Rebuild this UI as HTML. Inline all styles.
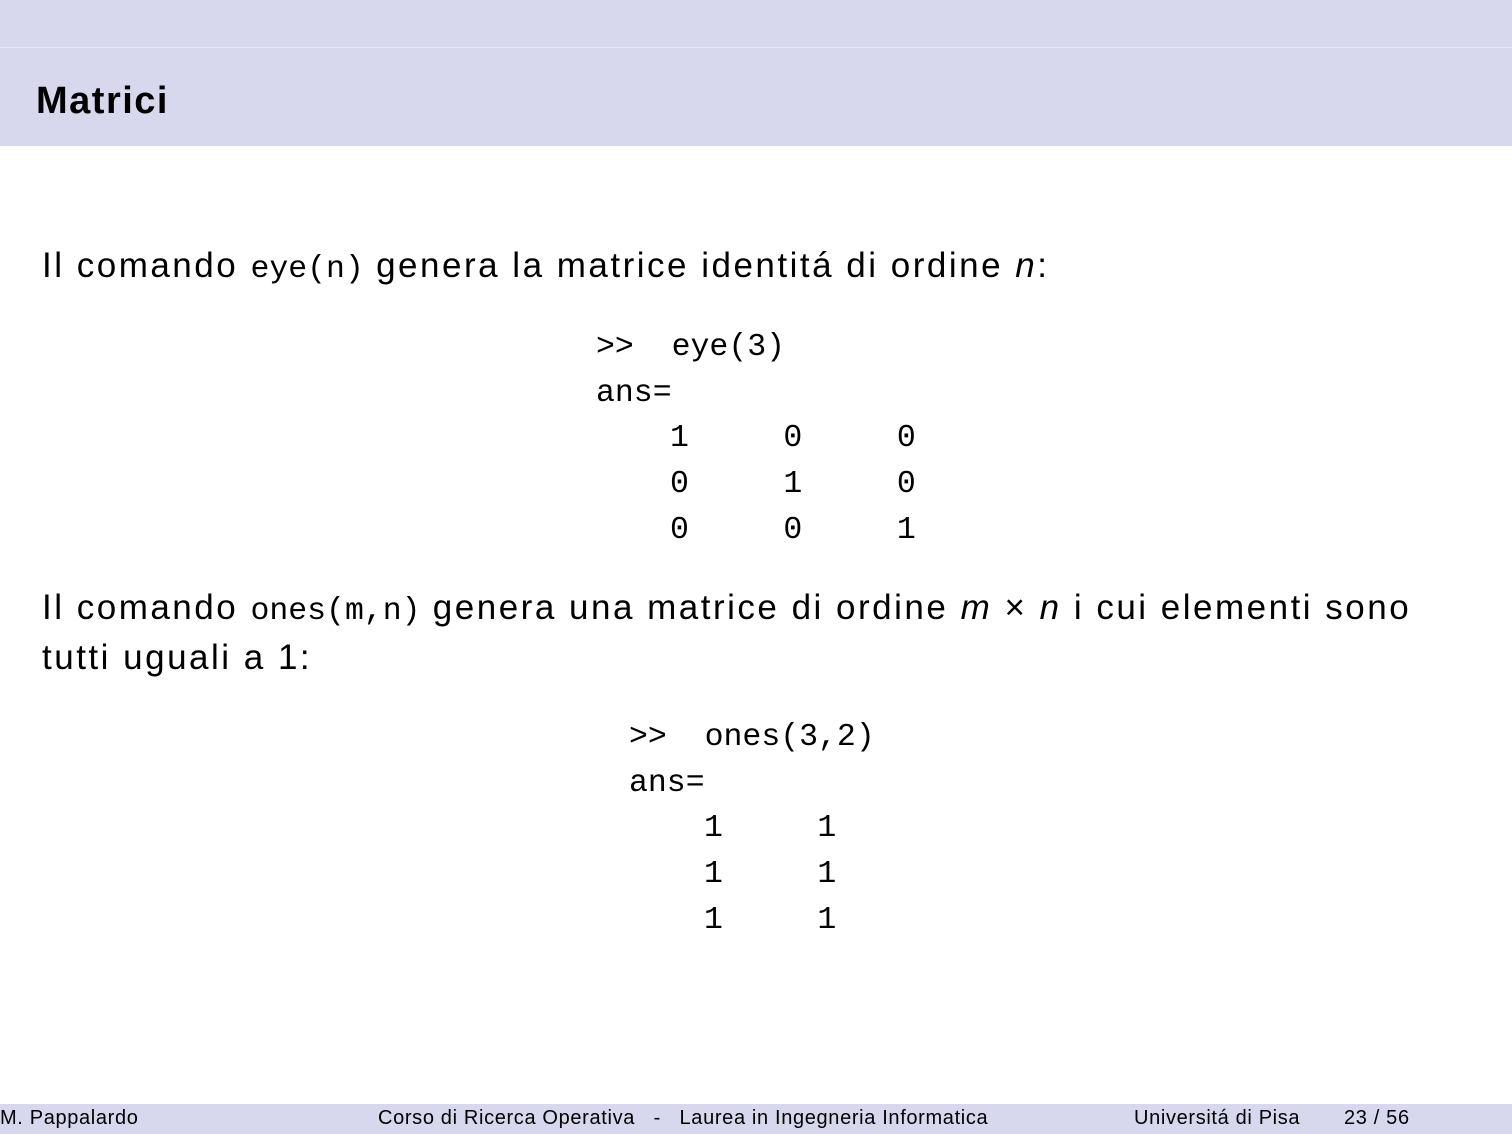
<!DOCTYPE html>
<html><head><meta charset="utf-8"><style>
body{margin:0;width:1512px;height:1134px;position:relative;background:#fff;font-family:"Liberation Sans",sans-serif;color:#000;overflow:hidden}
.a{position:absolute;white-space:nowrap;line-height:40px}
.m{font-family:"Liberation Mono",monospace;font-size:31.5px;letter-spacing:0}
.t{font-size:35px;letter-spacing:2.5px}
.f{position:absolute;top:1104px;height:30px;line-height:28px;font-size:20px;white-space:nowrap;letter-spacing:0.65px}
</style></head><body>
<div style="position:absolute;left:0;top:0;width:1512px;height:146px;background:#d7d7ee"></div>
<div style="position:absolute;left:0;top:47px;width:1512px;height:1px;background:#e4e4f5"></div>
<div class="a" style="left:36px;top:81px;font-size:38px;font-weight:bold;letter-spacing:1.5px">Matrici</div>
<div class="a t" style="left:42px;top:246px">Il comando <span class="m">eye(n)</span> genera la matrice identitá di ordine <i>n</i>:</div>
<div class="a m" style="left:596px;top:328px">&gt;&gt;&nbsp; eye(3)</div>
<div class="a m" style="left:596px;top:374px">ans=</div>
<div class="a m" style="left:670px;top:419px">1&nbsp;&nbsp;&nbsp;&nbsp;&nbsp;0&nbsp;&nbsp;&nbsp;&nbsp;&nbsp;0</div>
<div class="a m" style="left:670px;top:465px">0&nbsp;&nbsp;&nbsp;&nbsp;&nbsp;1&nbsp;&nbsp;&nbsp;&nbsp;&nbsp;0</div>
<div class="a m" style="left:670px;top:511px">0&nbsp;&nbsp;&nbsp;&nbsp;&nbsp;0&nbsp;&nbsp;&nbsp;&nbsp;&nbsp;1</div>
<div class="a t" style="left:42px;top:588px">Il comando <span class="m">ones(m,n)</span> genera una matrice di ordine <i>m</i> × <i>n</i> i cui elementi sono</div>
<div class="a t" style="left:42px;top:638px">tutti uguali a 1:</div>
<div class="a m" style="left:629px;top:718px">&gt;&gt;&nbsp; ones(3,2)</div>
<div class="a m" style="left:629px;top:764px">ans=</div>
<div class="a m" style="left:704px;top:809px">1&nbsp;&nbsp;&nbsp;&nbsp;&nbsp;1</div>
<div class="a m" style="left:704px;top:855px">1&nbsp;&nbsp;&nbsp;&nbsp;&nbsp;1</div>
<div class="a m" style="left:704px;top:901px">1&nbsp;&nbsp;&nbsp;&nbsp;&nbsp;1</div>
<div style="position:absolute;left:0;top:1104px;width:1512px;height:30px;background:#d7d7ee"></div>
<div class="f" style="left:0">M. Pappalardo</div>
<div class="f" style="left:378px">Corso di Ricerca Operativa &nbsp;&nbsp;- &nbsp;&nbsp;Laurea in Ingegneria Informatica</div>
<div class="f" style="left:1134px">Universitá di Pisa</div>
<div class="f" style="left:1344px">23 / 56</div>
</body></html>
